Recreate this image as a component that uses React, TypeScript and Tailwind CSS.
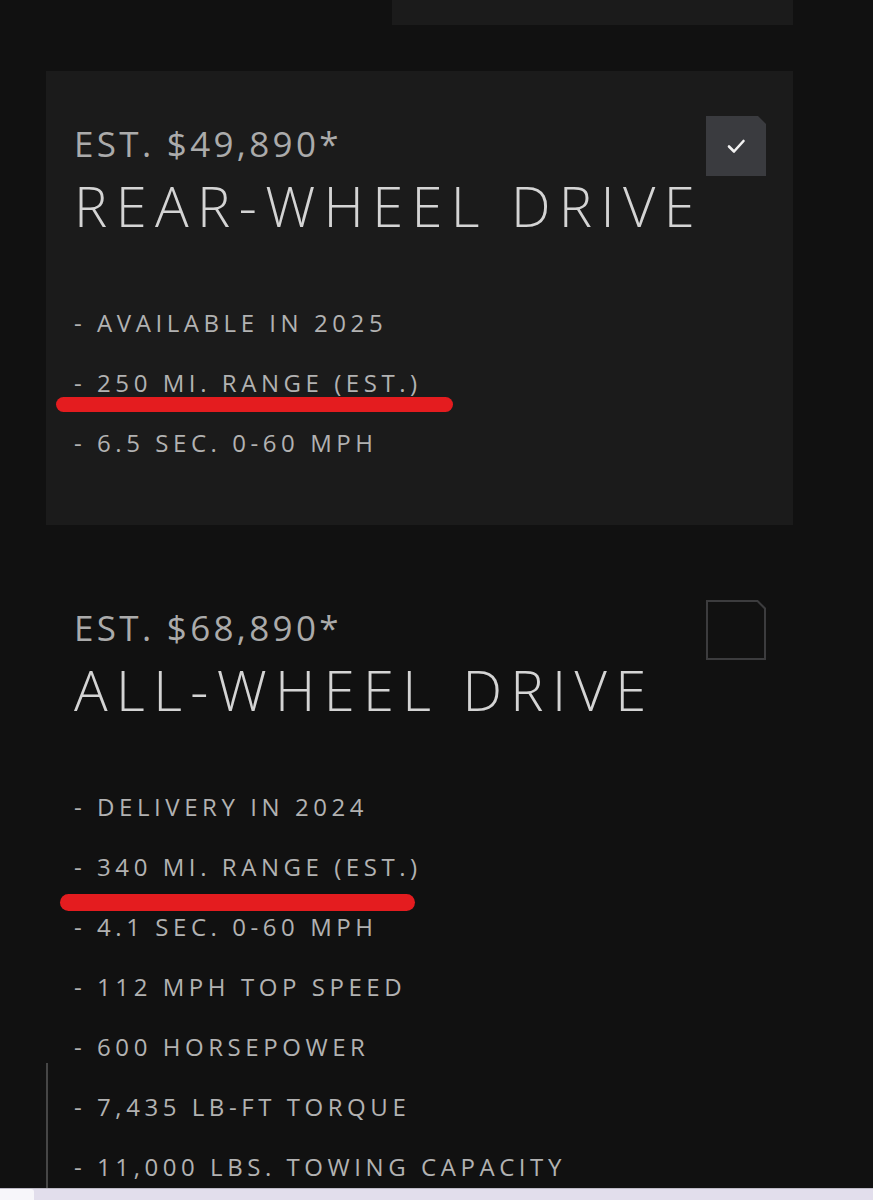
import React from 'react';

type Trim = {
  price: string;
  name: string;
  features: string[];
  mark: number; // index of the feature underlined in red
  markClass: string;
  selected: boolean;
  boxed: boolean;
};

const TRIMS: Trim[] = [
  {
    price: 'EST. $49,890*',
    name: 'REAR-WHEEL DRIVE',
    features: ['- AVAILABLE IN 2025', '- 250 MI. RANGE (EST.)', '- 6.5 SEC. 0-60 MPH'],
    mark: 1,
    markClass: 'top-[44px] h-[15px] w-[397px] -ml-[18px]',
    selected: true,
    boxed: true,
  },
  {
    price: 'EST. $68,890*',
    name: 'ALL-WHEEL DRIVE',
    features: [
      '- DELIVERY IN 2024',
      '- 340 MI. RANGE (EST.)',
      '- 4.1 SEC. 0-60 MPH',
      '- 112 MPH TOP SPEED',
      '- 600 HORSEPOWER',
      '- 7,435 LB-FT TORQUE',
      '- 11,000 LBS. TOWING CAPACITY',
    ],
    mark: 1,
    markClass: 'top-[57px] h-[17px] w-[355px] -ml-[14px]',
    selected: false,
    boxed: false,
  },
];

function CheckBox({ checked }: { checked: boolean }) {
  // square with a clipped top-right corner
  return (
    <svg width="60" height="60" viewBox="0 0 60 60" className="shrink-0">
      {checked ? (
        <>
          <path d="M0 0 H52 L60 8 V60 H0 Z" fill="#3a3b3f" />
          <path d="M23 30.5 L28 35.5 L37.5 25" fill="none" stroke="#f2f2f2" strokeWidth="2.6" strokeLinecap="round" strokeLinejoin="round" />
        </>
      ) : (
        <path d="M1 1 H51.5 L59 8.5 V59 H1 Z" fill="none" stroke="#3c3c3e" strokeWidth="2" />
      )}
    </svg>
  );
}

function TrimCard({ trim }: { trim: Trim }) {
  return (
    <div className={`w-[747px] ml-[46px] pt-[45px] pl-[28px] pr-[27px] ${trim.boxed ? 'bg-[#1b1b1b] h-[454px]' : ''}`}>
      <div className="flex justify-between">
        <div>
          <div className="text-[35px] leading-[40px] mt-[8px] text-[#ababab] tracking-[0.095em]">{trim.price}</div>
          <div className="text-[56px] leading-[64px] mt-[9px] text-[#d4d4d4] tracking-[0.15em] font-light">{trim.name}</div>
        </div>
        <CheckBox checked={trim.selected} />
      </div>
      <ul className="mt-[56px]">
        {trim.features.map((f, i) => (
          <li key={f} className="relative h-[60px] text-[24px] leading-[60px] text-[#b2b2b2] tracking-[0.19em]">
            {f}
            {trim.mark === i && <span className={`absolute left-0 rounded-full bg-[#e41c1f] ${trim.markClass}`} />}
          </li>
        ))}
      </ul>
    </div>
  );
}

export default function App() {
  return (
    <div className="relative h-[1200px] overflow-hidden bg-[#111111] font-['Open_Sans',sans-serif]">
      <div className="ml-[392px] w-[401px] h-[25px] bg-[#1b1b1b]" />
      <div className="mt-[46px]">
        <TrimCard trim={TRIMS[0]} />
      </div>
      <div className="mt-[30px]">
        <TrimCard trim={TRIMS[1]} />
      </div>

      {/* thin rule at lower left */}
      <div className="absolute left-[46px] top-[1063px] w-[2px] h-[125px] bg-[#464646]" />

      {/* window chrome peeking in at the bottom */}
      <div className="absolute left-0 right-0 bottom-0 h-[12px] bg-[#e2deec] border-t border-[#bdbac6]">
        <div className="w-[34px] h-full bg-[#f7f6fa] rounded-tr-[3px]" />
      </div>
    </div>
  );
}
